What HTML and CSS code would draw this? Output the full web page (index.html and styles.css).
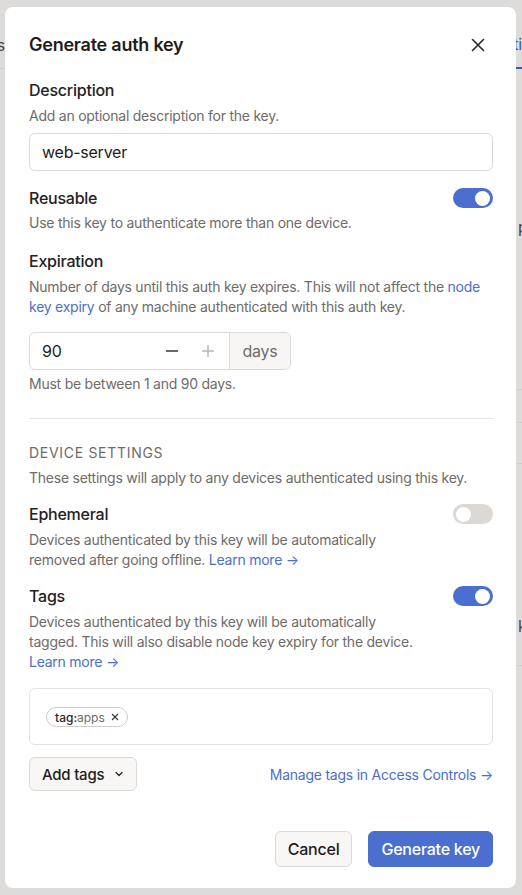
FILE: index.html
```html
<!DOCTYPE html>
<html lang="en">
<head>
<meta charset="utf-8">
<title>Generate auth key</title>
<link rel="stylesheet" href="styles.css">
</head>
<body>
<div class="page">
  <div class="page-nav">
    <span class="nav-item">Logs</span>
    <span class="nav-item nav-active">Settings</span>
  </div>
  <div class="page-rows">
    <div class="page-row r1"><span class="row-text">pending</span></div>
    <div class="page-row r2"></div>
    <div class="page-row r3"></div>
    <div class="page-row r4"><span class="row-text">key</span></div>
  </div>
</div>

<div class="overlay">
  <div class="modal" role="dialog">
    <div class="modal-header">
      <h2 class="modal-title">Generate auth key</h2>
      <button class="close-btn" aria-label="Close">
        <svg width="16" height="16" viewBox="0 0 16 16"><path d="M2.5 2.5 L13.5 13.5 M13.5 2.5 L2.5 13.5" stroke="#2a2726" stroke-width="1.6" stroke-linecap="round" fill="none"/></svg>
      </button>
    </div>

    <div class="field f-desc">
      <div class="label">Description</div>
      <div class="help">Add an optional description for the key.</div>
      <div class="text-input">web-server</div>
    </div>

    <div class="field f-reusable">
      <div class="row-toggle">
        <div class="label">Reusable</div>
        <span class="toggle on"><span class="knob"></span></span>
      </div>
      <div class="help">Use this key to authenticate more than one device.</div>
    </div>

    <div class="field f-exp">
      <div class="label">Expiration</div>
      <div class="help">Number of days until this auth key expires. This will not affect the <a class="link">node key expiry</a> of any machine authenticated with this auth key.</div>
      <div class="number-input">
        <span class="num-value">90</span>
        <span class="stepper">
          <svg width="14" height="14" viewBox="0 0 14 14"><path d="M1 7 H13" stroke="#3a3634" stroke-width="1.6"/></svg>
          <svg width="14" height="14" viewBox="0 0 14 14"><path d="M1 7 H13 M7 1 V13" stroke="#b9b5b2" stroke-width="1.4"/></svg>
        </span>
        <span class="addon">days</span>
      </div>
      <div class="help small-gap">Must be between 1 and 90 days.</div>
    </div>

    <hr class="divider">

    <div class="section-title">Device settings</div>
    <div class="help">These settings will apply to any devices authenticated using this key.</div>

    <div class="field f-eph">
      <div class="row-toggle">
        <div class="label">Ephemeral</div>
        <span class="toggle"><span class="knob"></span></span>
      </div>
      <div class="help narrow">Devices authenticated by this key will be automatically removed after going offline. <a class="link">Learn more →</a></div>
    </div>

    <div class="field f-tags">
      <div class="row-toggle">
        <div class="label">Tags</div>
        <span class="toggle on"><span class="knob"></span></span>
      </div>
      <div class="help narrow">Devices authenticated by this key will be automatically tagged. This will also disable node key expiry for the device. <a class="link">Learn more →</a></div>
      <div class="tag-box">
        <span class="chip"><span class="chip-key">tag:</span><span class="chip-val">apps</span>
          <svg width="8" height="8" viewBox="0 0 8 8"><path d="M1 1 L7 7 M7 1 L1 7" stroke="#3a3634" stroke-width="1.1"/></svg>
        </span>
      </div>
      <div class="tag-actions">
        <button class="btn btn-secondary btn-add">Add tags
          <svg width="10" height="10" viewBox="0 0 10 10"><path d="M2 3.5 L5 6.5 L8 3.5" stroke="#2a2726" stroke-width="1.3" fill="none" stroke-linecap="round" stroke-linejoin="round"/></svg>
        </button>
        <a class="link manage">Manage tags in Access Controls →</a>
      </div>
    </div>

    <div class="modal-footer">
      <button class="btn btn-secondary">Cancel</button>
      <button class="btn btn-primary">Generate key</button>
    </div>
  </div>
</div>
</body>
</html>
```
FILE: styles.css
```css
* { box-sizing: border-box; }
html, body { margin: 0; padding: 0; }
body {
  width: 522px;
  height: 895px;
  background: #dddcdb;
  font-family: Inter, "Noto Sans", sans-serif;
  letter-spacing: -0.015em;
  color: #1f1c1b;
  position: relative;
  overflow: hidden;
}

/* background page (dimmed) */
.page { width: 522px; height: 895px; overflow: hidden; }
.page-nav {
  height: 69px;
  border-bottom: 1px solid #cfcdcb;
  display: flex;
  justify-content: space-between;
  align-items: center;
  padding-top: 22px;
}
.nav-item { font-size: 16px; color: #4a4746; margin-left: -31px; }
.nav-active {
  color: #3d5aa8;
  margin-left: 0;
  margin-right: -27px;
  align-self: stretch;
  display: flex;
  align-items: center;
  padding-bottom: 2px;
  border-bottom: 2px solid #3d5aa8;
  margin-bottom: -1px;
}
.page-rows { display: flex; flex-direction: column; align-items: flex-end; }
.page-row { width: 100px; border-bottom: 1px solid #cfcdcb; margin-right: -95px; font-size: 16px; color: #4a4746; }
.r1 { height: 321px; padding-top: 148px; }
.r2 { height: 33px; }
.r3 { height: 41px; }
.r4 { height: 202px; padding-top: 152px; }
.row-text { display: block; padding-left: 1px; }

/* overlay + modal */
.overlay { position: absolute; inset: 0; }
.modal {
  position: absolute;
  left: 5px;
  top: 7px;
  width: 511px;
  height: 881px;
  background: #ffffff;
  border-radius: 8px;
  padding: 24px 23px 21px 24px;
  display: flex;
  flex-direction: column;
}
.modal-header {
  display: flex;
  justify-content: space-between;
  align-items: center;
  height: 28px;
}
.modal-title {
  margin: 0;
  font-size: 18px;
  line-height: 28px;
  font-weight: 600;
  color: #1f1c1b;
}
.close-btn {
  border: 0;
  background: none;
  padding: 0;
  margin-right: 7px;
  width: 16px;
  height: 16px;
  display: flex;
}

.field { display: flex; flex-direction: column; }
.label { font-size: 16px; line-height: 24px; font-weight: 500; color: #24211f; }
.help { font-size: 14px; line-height: 20px; color: #6f6b69; margin-top: 4px; }
.help.narrow { max-width: 384px; }
.link { color: #4b6fcb; text-decoration: none; }

.f-desc { margin-top: 19px; }
.text-input {
  margin-top: 7px;
  height: 38px;
  border: 1px solid #dcd9d7;
  border-radius: 6px;
  padding: 0 12px;
  display: flex;
  align-items: center;
  font-size: 16px;
  color: #1f1c1b;
}

.row-toggle { display: flex; justify-content: space-between; align-items: center; }
.toggle {
  width: 40px;
  height: 20px;
  border-radius: 10px;
  background: #dcd8d6;
  display: flex;
  align-items: center;
  padding: 0 3px;
}
.toggle .knob { width: 15px; height: 15px; border-radius: 50%; background: #fff; }
.toggle.on { background: #4b6fcf; justify-content: flex-end; }

.f-reusable { margin-top: 15px; }
.f-reusable .help { margin-top: 3px; }
.f-exp { margin-top: 16px; }

.number-input {
  margin-top: 15px;
  width: 262px;
  height: 38px;
  border: 1px solid #dcd9d7;
  border-radius: 6px;
  display: flex;
  align-items: stretch;
  overflow: hidden;
}
.num-value { flex: 1; display: flex; align-items: center; padding-left: 12px; font-size: 16px; color: #1f1c1b; }
.stepper { display: flex; align-items: center; gap: 22px; padding-right: 14px; }
.addon {
  width: 61px;
  background: #f7f6f5;
  border-left: 1px solid #dcd9d7;
  display: flex;
  align-items: center;
  justify-content: center;
  font-size: 16px;
  color: #6f6b69;
}

.divider { border: 0; border-top: 1px solid #e6e4e2; margin: 24px 0 0; height: 0; }

.section-title {
  margin-top: 24px;
  font-size: 14px;
  line-height: 20px;
  text-transform: uppercase;
  letter-spacing: 0.05em;
  color: #6f6b69;
}
.section-title + .help { margin-top: 5px; }

.f-eph { margin-top: 14px; }
.f-tags { margin-top: 14px; }

.tag-box {
  margin-top: 16px;
  height: 57px;
  border: 1px solid #e6e4e2;
  border-radius: 6px;
  padding: 18px 16px 0;
  display: flex;
  align-items: flex-start;
}
.chip {
  height: 20px;
  border: 1px solid #cfcbc8;
  border-radius: 10px;
  padding: 0 8px 0 8px;
  display: inline-flex;
  align-items: center;
  gap: 6px;
  font-size: 12px;
  font-weight: 500;
  letter-spacing: 0;
}
.chip-key { color: #2a2726; }
.chip-val { color: #6f6b69; font-weight: 400; margin-left: -6px; }

.tag-actions {
  margin-top: 12px;
  display: flex;
  justify-content: space-between;
  align-items: center;
}
.manage { font-size: 14px; }

.btn {
  font-family: inherit;
  font-size: 16px;
  font-weight: 500;
  letter-spacing: -0.015em;
  border-radius: 6px;
  height: 36px;
  padding: 0 12px;
  display: inline-flex;
  align-items: center;
  gap: 10px;
  cursor: pointer;
}
.btn-secondary { background: #f8f7f6; border: 1px solid #dcd9d7; color: #1f1c1b; }
.btn-primary { background: #4b6fcf; border: 1px solid #4b6fcf; color: #fff; }
.btn-add { height: 34px; font-size: 15px; }

.modal-footer {
  margin-top: auto;
  display: flex;
  justify-content: flex-end;
  gap: 16px;
}
```
